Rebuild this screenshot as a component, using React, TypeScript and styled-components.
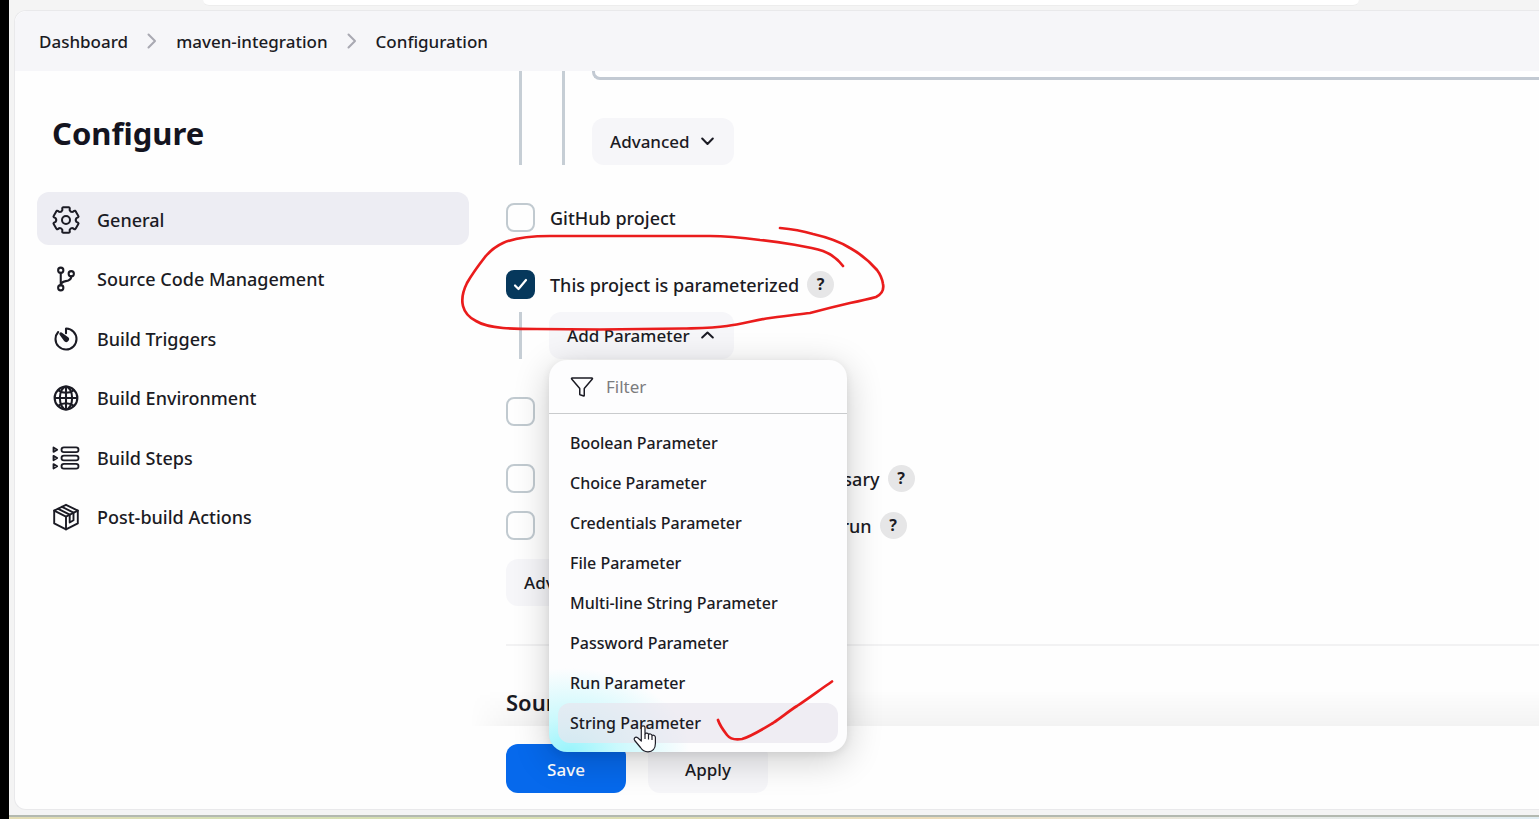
import React from "react";
import styled, { createGlobalStyle } from "styled-components";
import {
  IoGitBranchOutline,
  IoTimerOutline,
  IoGlobeOutline,
  IoFunnelOutline,
} from "react-icons/io5";

const GlobalStyle = createGlobalStyle`
  *, *::before, *::after { box-sizing: border-box; }
  body {
    margin: 0;
    background: #f4f4f4;
    color: #1b1b24;
    font-family: "Noto Sans", "Open Sans", sans-serif;
    font-size: 17px;
    font-weight: 500;
    overflow: hidden;
  }
  button, input, textarea { font: inherit; color: inherit; }
`;

const Screen = styled.div`
  display: flex;
  min-height: 100vh;
`;

const BlackEdge = styled.div`
  flex: none;
  width: 9px;
  background: #000;
`;

const BrowserWindow = styled.div`
  flex: 1;
  min-width: 0;
  display: flex;
  flex-direction: column;
  background: #f4f4f4;
`;

const Toolbar = styled.div`
  height: 10px;
  padding: 0 180px 0 194px;
`;

const AddressBar = styled.div`
  height: 6px;
  background: #fff;
  border-bottom: 1px solid #ededed;
  border-radius: 0 0 16px 16px;
`;

const Page = styled.div`
  flex: 1;
  display: flex;
  flex-direction: column;
  margin: 0 0 5px 5px;
  background: #fefefe;
  border: 1px solid #e9e9eb;
  border-right: 0;
  border-radius: 12px 0 0 12px;
`;

const Desktop = styled.div`
  height: 4px;
  border-top: 2px solid #b3b9b0;
  background: linear-gradient(90deg, #e3dcb4, #d5e0b4 15%, #d9dfb2 35%, #ecdcb8 60%, #e8e9e2 80%, #e0edf3);
`;

const Breadcrumbs = styled.nav`
  height: 60px;
  display: flex;
  align-items: center;
  gap: 19px;
  padding-left: 24px;
  background: #f6f6f9;
  border-radius: 12px 0 0 0;
`;

const Crumb = styled.a`
  color: inherit;
  text-decoration: none;
`;

const Columns = styled.div`
  flex: 1;
  display: flex;
`;

const Sidebar = styled.aside`
  flex: none;
  width: 491px;
  padding: 39px 37px 0 22px;
`;

const Title = styled.h1`
  margin: 0 0 36px 15px;
  font-size: 31px;
  line-height: 46px;
  font-weight: 700;
  color: #14141f;
`;

const TaskList = styled.nav`
  height: 351px;
  display: flex;
  flex-direction: column;
  justify-content: space-between;
`;

const Task = styled.a<{ $active?: boolean }>`
  height: 53px;
  display: flex;
  align-items: center;
  gap: 17px;
  padding: 2px 0 0 15px;
  border-radius: 12px;
  background: ${(p) => (p.$active ? "#ededf3" : "transparent")};
  color: inherit;
  font-size: 18px;
  text-decoration: none;

  svg { flex: none; width: 28px; height: 28px; }
  svg[viewBox="0 0 512 512"] * { stroke-width: 38px; }
`;

const Main = styled.main`
  flex: 1;
  min-width: 0;
  display: flex;
  flex-direction: column;
`;

const Form = styled.div`
  flex: 1;
`;

const Nested = styled.div<{ $flush?: boolean }>`
  margin-left: 13px;
  padding-left: 27px;
  border-left: 3px solid #c6ced5;
  margin-top: ${(p) => (p.$flush ? "0" : "13px")};
`;

const Description = styled.textarea`
  display: block;
  width: 100%;
  height: 9px;
  padding: 0;
  border: 3px solid #c3cad3;
  border-top: 0;
  border-right: 0;
  border-radius: 0 0 0 8px;
  background: #fff;
  resize: none;
  overflow: hidden;
`;

const SoftButton = styled.button<{ $top?: number }>`
  display: flex;
  align-items: center;
  gap: 11px;
  height: 47px;
  margin: ${(p) => p.$top ?? 0}px 0 0;
  padding: 0 20px 0 18px;
  border: 0;
  border-radius: 12px;
  background: #f6f6f9;
`;

const Option = styled.div<{ $top: number }>`
  display: flex;
  align-items: center;
  height: 29px;
  margin-top: ${(p) => p.$top}px;
`;

const OptionLabel = styled.label`
  display: flex;
  align-items: center;
  gap: 15px;
  font-size: 18px;
  white-space: nowrap;
`;

const Tick = styled.span`
  position: relative;
  display: flex;

  svg { position: absolute; inset: 0; pointer-events: none; }
`;

const Checkbox = styled.input`
  appearance: none;
  width: 29px;
  height: 29px;
  margin: 0;
  border: 2px solid #c1cad0;
  border-radius: 8px;
  background: #fefefe;

  &:checked { background: #06385c; border-color: #06385c; }
`;

const Help = styled.button`
  width: 27px;
  height: 27px;
  margin-left: 8px;
  padding: 0;
  border: 0;
  border-radius: 50%;
  background: #e6e6e7;
  font-size: 16px;
  font-weight: 700;
  line-height: 27px;
  text-align: center;
`;

const Divider = styled.hr`
  height: 2px;
  margin: 38px 0 0;
  border: 0;
  background: #f2f2f3;
`;

const SectionTitle = styled.h2`
  margin: 40px 0 0;
  font-size: 22px;
  line-height: 32px;
  font-weight: 600;
`;

const Parameterized = styled.section`
  position: relative;
  z-index: 2;
`;

const Dropdown = styled.div`
  position: absolute;
  top: 90px;
  left: 43px;
  width: 298px;
  border-radius: 18px;
  background:
    radial-gradient(120px 84px at 20px 100%, #98f4fc 0%, rgba(180, 247, 252, 0.7) 40%, rgba(255, 255, 255, 0) 100%),
    #fdfdfe;
  box-shadow: 0 8px 36px rgba(0, 0, 0, 0.2), 0 2px 8px rgba(0, 0, 0, 0.07);
`;

const FilterRow = styled.label`
  display: flex;
  align-items: center;
  gap: 12px;
  height: 54px;
  padding: 0 21px;
  border-bottom: 1px solid #c9cbcd;

  svg { flex: none; width: 24px; height: 24px; }
`;

const FilterInput = styled.input`
  width: 100%;
  min-width: 0;
  padding: 0;
  border: 0;
  outline: 0;
  background: transparent;
  font-weight: 400;

  &::placeholder { color: #7c7c7e; opacity: 1; }
`;

const Menu = styled.div`
  display: flex;
  flex-direction: column;
  padding: 9px;
`;

const MenuItem = styled.button<{ $active?: boolean }>`
  height: 40px;
  padding: 0 12px;
  border: 0;
  border-radius: 12px;
  background: ${(p) => (p.$active ? "rgba(232, 230, 238, 0.7)" : "transparent")};
  font-size: 16px;
  font-weight: 550;
  text-align: left;
`;

const Ink = styled.svg`
  position: absolute;
  top: -50px;
  left: -56px;
  pointer-events: none;
`;

const ActionBar = styled.div`
  position: relative;
  display: flex;
  gap: 22px;
  height: 83px;
  padding-top: 18px;
  background: #fefefe;

  &::before {
    content: "";
    position: absolute;
    right: 0;
    bottom: 100%;
    left: -36px;
    height: 36px;
    background: linear-gradient(rgba(0, 0, 0, 0), rgba(0, 0, 0, 0.045));
    mask-image: linear-gradient(90deg, transparent, #000 40px);
    pointer-events: none;
  }
`;

const ActionButton = styled.button<{ $primary?: boolean }>`
  width: 120px;
  height: 49px;
  padding: 2px 0 0;
  border: 0;
  border-radius: 12px;
  background: ${(p) => (p.$primary ? "#0669ec" : "#f6f6f9")};
  color: ${(p) => (p.$primary ? "#fff" : "inherit")};
`;

const CrumbArrow = () => (
  <svg width="10" height="16" viewBox="0 0 10 16" fill="none" stroke="#a9a9b2" strokeWidth="2" strokeLinecap="round" strokeLinejoin="round" aria-hidden="true">
    <path d="M1.500 1.500 8 8 1.500 14.500" />
  </svg>
);

const Chevron = ({ up }: { up?: boolean }) => (
  <svg width="13" height="14" viewBox="0 0 13 14" fill="none" stroke="currentColor" strokeWidth="2" strokeLinecap="round" strokeLinejoin="round" aria-hidden="true">
    <path d={up ? "M1.200 8.500 6.500 3.500 11.800 8.500" : "M1.200 3.500 6.500 9 11.800 3.500"} />
  </svg>
);

// Six flared teeth round the hub, one every 60 degrees.
const gearPoint = (radius: number, degrees: number) => {
  const a = (degrees * Math.PI) / 180;
  return `${(14 + radius * Math.cos(a)).toFixed(2)} ${(14 + radius * Math.sin(a)).toFixed(2)}`;
};

const gearOutline =
  [30, 90, 150, 210, 270, 330]
    .map(
      (a, i) =>
        `${i ? "L" : "M"}${gearPoint(12.2, a - 18)}Q${gearPoint(13.4, a - 16)} ${gearPoint(12.9, a - 11)}` +
        `L${gearPoint(12.9, a + 11)}Q${gearPoint(13.4, a + 16)} ${gearPoint(12.2, a + 18)}` +
        `L${gearPoint(10.6, a + 20)}Q${gearPoint(9, a + 30)} ${gearPoint(10.6, a + 40)}`
    )
    .join("") + "z";

const SettingsIcon = () => (
  <svg viewBox="0 0 28 28" fill="none" stroke="currentColor" strokeWidth="2" strokeLinejoin="round" aria-hidden="true">
    <path d={gearOutline} />
    <circle cx="14" cy="14" r="4" />
  </svg>
);

const StepsIcon = () => (
  <svg viewBox="0 0 28 28" fill="none" stroke="currentColor" strokeWidth="1.800" strokeLinejoin="round" aria-hidden="true">
    {[5.7, 14, 22.3].map((y) => (
      <g key={y}>
        <path d={`M1.500 ${y - 2.2} 5.200 ${y} 1.500 ${y + 2.2}z`} />
        <rect x="9.500" y={y - 2.4} width="17" height="4.800" rx="2.400" />
      </g>
    ))}
  </svg>
);

const PackageIcon = () => (
  <svg viewBox="0 0 28 28" fill="none" stroke="currentColor" strokeWidth="1.900" strokeLinejoin="round" strokeLinecap="round" aria-hidden="true">
    <path d="M14 1.800 25.800 7.600V20.400L14 26.400 2.200 20.400V7.600z" />
    <path d="M2.200 7.600 14 13.600 25.800 7.600M14 13.600V26.400" />
    <path d="M6.200 5.800 17.700 11.700V19.500L21.500 17.300V9.700L10 3.800" />
  </svg>
);

const Checked = () => (
  <svg width="29" height="29" viewBox="0 0 29 29" fill="none" stroke="#fff" strokeWidth="2.200" strokeLinecap="round" strokeLinejoin="round" aria-hidden="true">
    <path d="M9 15.500 12.500 19 20 10" />
  </svg>
);

const tasks = [
  { name: "General", icon: <SettingsIcon /> },
  { name: "Source Code Management", icon: <IoGitBranchOutline /> },
  { name: "Build Triggers", icon: <IoTimerOutline /> },
  { name: "Build Environment", icon: <IoGlobeOutline /> },
  { name: "Build Steps", icon: <StepsIcon /> },
  { name: "Post-build Actions", icon: <PackageIcon /> },
];

const parameters = [
  "Boolean Parameter",
  "Choice Parameter",
  "Credentials Parameter",
  "File Parameter",
  "Multi-line String Parameter",
  "Password Parameter",
  "Run Parameter",
  "String Parameter",
];

function CheckOption({ label, top, checked, help }: { label: string; top: number; checked?: boolean; help?: boolean }) {
  return (
    <Option $top={top}>
      <OptionLabel>
        <Tick>
          <Checkbox type="checkbox" defaultChecked={checked} />
          {checked && <Checked />}
        </Tick>
        {label}
      </OptionLabel>
      {help && <Help type="button" aria-label={`Help for ${label}`}>?</Help>}
    </Option>
  );
}

export default function App() {
  return (
    <>
      <GlobalStyle />
      <Screen>
        <BlackEdge />
        <BrowserWindow>
          <Toolbar>
            <AddressBar />
          </Toolbar>
          <Page>
            <Breadcrumbs aria-label="Breadcrumb">
              <Crumb href="#dashboard">Dashboard</Crumb>
              <CrumbArrow />
              <Crumb href="#project">maven-integration</Crumb>
              <CrumbArrow />
              <Crumb href="#configuration">Configuration</Crumb>
            </Breadcrumbs>
            <Columns>
              <Sidebar>
                <Title>Configure</Title>
                <TaskList aria-label="Sections">
                  {tasks.map((task, i) => (
                    <Task key={task.name} href="#section" $active={i === 0}>
                      {task.icon}
                      {task.name}
                    </Task>
                  ))}
                </TaskList>
              </Sidebar>
              <Main>
                <Form>
                  <Nested $flush>
                    <Nested $flush>
                      <Description aria-label="Description" />
                      <SoftButton type="button" $top={38}>
                        Advanced
                        <Chevron />
                      </SoftButton>
                    </Nested>
                  </Nested>
                  <CheckOption label="GitHub project" top={38} />
                  <Parameterized>
                    <CheckOption label="This project is parameterized" top={38} checked help />
                    <Nested>
                      <SoftButton type="button" aria-expanded="true">
                        Add Parameter
                        <Chevron up />
                      </SoftButton>
                    </Nested>
                    <Dropdown>
                      <FilterRow>
                        <IoFunnelOutline />
                        <FilterInput type="text" placeholder="Filter" aria-label="Filter" />
                      </FilterRow>
                      <Menu>
                        {parameters.map((name) => (
                          <MenuItem key={name} type="button" $active={name === "String Parameter"}>
                            {name}
                          </MenuItem>
                        ))}
                      </Menu>
                    </Dropdown>
                    <Ink width="450" height="540" viewBox="450 220 450 540" fill="none" aria-hidden="true">
                      <g stroke="#ea1c1c" strokeWidth="2.700" strokeLinecap="round" strokeLinejoin="round">
                        <path d="M843 266C837 258 831 254 823 251C811 247 780 242 760 240C745 238 730 236 710 236H550C525 236 512 239 503 243C494 247 490 251 485 257C478 266 471 276 467 283C463 291 461 298 463 306C465 314 470 318 476 321C484 326 493 327 503 328C515 329 525 329 537 329L600 329.500L683 328.500C700 328 713 328 727 326C742 324 756 320 770 318C785 316 800 314 810 313C825 309 837 306 850 303C860 301 869 299 876 297C882 294 884 289 883 284C882 277 880 274 877 270C870 262 861 254 850 248C839 241 826 237 813 234C803 231 792 229 780 228" />
                        <path d="M718 720C720 726 724 731 727 735C731 740 736 740 742 739C750 737 763 729 773 723C782 717 789 711 797 706C809 698 821 689 832 681.500" />
                      </g>
                      <path
                        d="M641.300 727.500C641.300 725.400 645 725.400 645 727.500V734C645.500 732.700 648.300 732.900 648.500 734.500C649.500 733.400 651.700 733.800 652 735.600C653.400 734.700 655.400 735.500 655.400 737.500V743.500C655.400 748.500 652.500 751.800 648 751.800C644.500 751.800 642.300 750.300 640.500 747.500L634.700 740.500C633 738.200 635.600 736.200 637.700 737.800L641.300 741z"
                        fill="#fff"
                        stroke="#20202a"
                        strokeWidth="1.200"
                        strokeLinejoin="round"
                      />
                      <path d="M645 734V739M648.500 735V739.500M652 736V740" stroke="#20202a" strokeWidth="1.200" />
                    </Ink>
                  </Parameterized>
                  <CheckOption label="Throttle builds" top={38} />
                  <CheckOption label="Execute concurrent builds if necessary" top={38} help />
                  <CheckOption label="Restrict where this project can be run" top={18} help />
                  <SoftButton type="button" $top={19}>
                    Advanced
                    <Chevron />
                  </SoftButton>
                  <Divider />
                  <SectionTitle>Source Code Management</SectionTitle>
                </Form>
                <ActionBar>
                  <ActionButton type="button" $primary>Save</ActionButton>
                  <ActionButton type="button">Apply</ActionButton>
                </ActionBar>
              </Main>
            </Columns>
          </Page>
          <Desktop />
        </BrowserWindow>
      </Screen>
    </>
  );
}
